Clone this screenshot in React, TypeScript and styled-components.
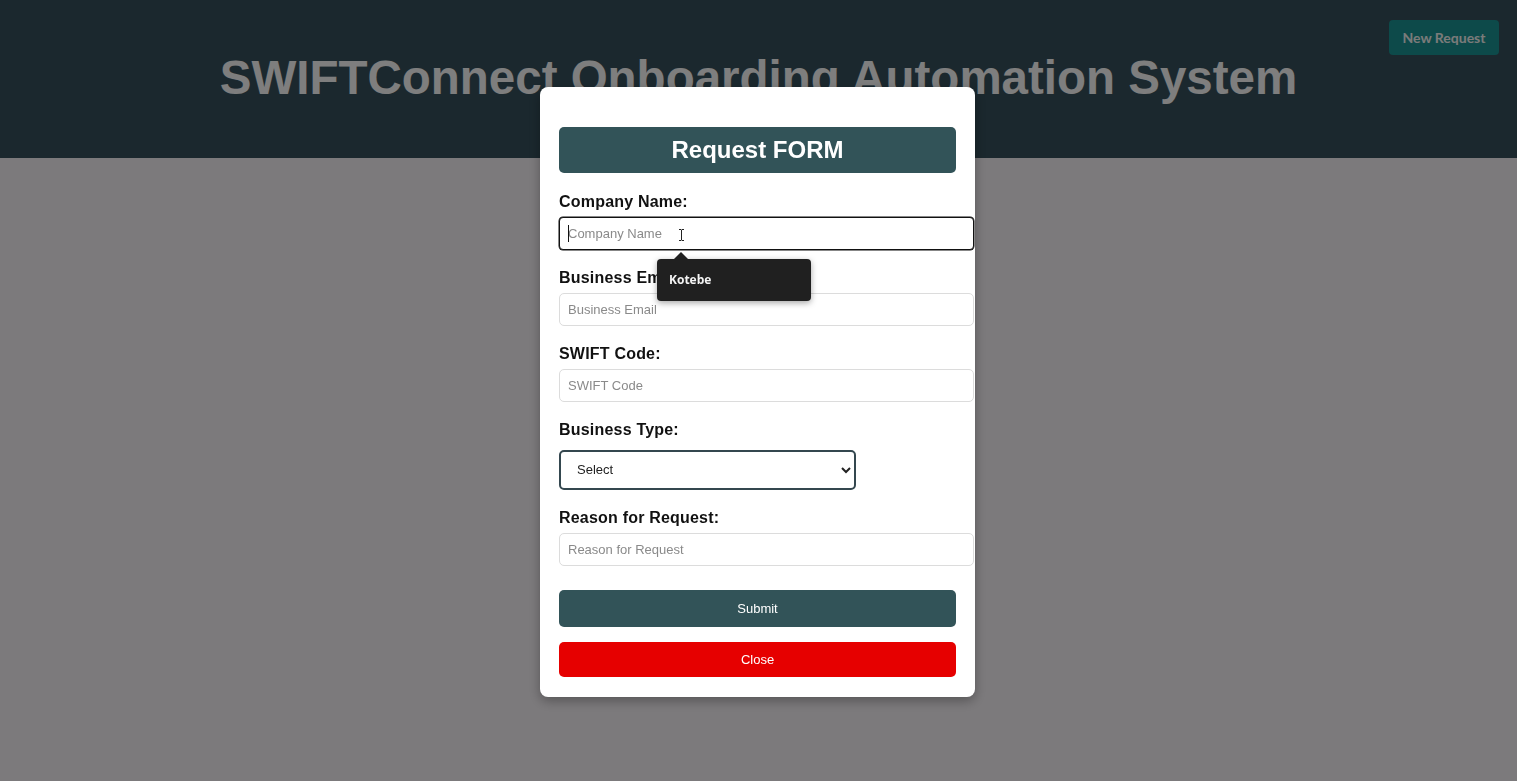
import React from "react";
import styled, { createGlobalStyle } from "styled-components";

const Global = createGlobalStyle`
  html, body { margin: 0; padding: 0; }
  body { font-family: "Liberation Sans", Arial, sans-serif; background: #f8f4f8; }
  * { box-sizing: content-box; }
`;

const Page = styled.div`
  min-height: 781px;
  background: #f8f4f8;
`;

const Header = styled.header`
  height: 158px;
  background: #36505c;
  display: grid;
  grid-template-columns: 1fr auto 1fr;
  align-items: center;
`;

const Title = styled.h1`
  grid-column: 2;
  margin: 0 0 4px;
  font-family: "Liberation Sans", Arial, sans-serif;
  font-size: 47.5px;
  font-weight: 700;
  color: #fcfcfc;
  white-space: nowrap;
`;

const NewButton = styled.button`
  grid-column: 3;
  justify-self: end;
  align-self: start;
  margin: 20px 18px 0 0;
  width: 110px;
  height: 35px;
  padding: 0;
  border: none;
  border-radius: 4px;
  background: #1a9494;
  color: #f4f6f4;
  font-family: Lato, "Liberation Sans", sans-serif;
  font-weight: 700;
  font-size: 14px;
`;

const Overlay = styled.div`
  position: fixed;
  inset: 0;
  background: rgba(0, 0, 0, 0.5);
  display: flex;
  align-items: center;
  justify-content: center;
`;

const Modal = styled.div`
  width: 397px;
  padding: 40px 19px 20px;
  margin-left: -2px;
  margin-top: 2px;
  background: #ffffff;
  border-radius: 8px;
  box-shadow: 0 4px 12px rgba(0, 0, 0, 0.3);
  display: flex;
  flex-direction: column;
`;

const Banner = styled.h2`
  margin: 0 0 20px;
  height: 46px;
  border-radius: 5px;
  background: #325358;
  color: #ffffff;
  font-size: 24px;
  font-weight: 700;
  display: flex;
  align-items: center;
  justify-content: center;
`;

const Field = styled.div<{ $gap: number }>`
  position: relative;
  display: flex;
  flex-direction: column;
  gap: ${(p) => p.$gap}px;
  margin-bottom: 19px;
`;

const Label = styled.label`
  font-size: 16px;
  font-weight: 700;
  color: #111;
  line-height: 18px;
  letter-spacing: 0.2px;
`;

const Input = styled.input<{ $focused?: boolean }>`
  width: 100%;
  padding: 8px;
  height: 15px;
  font-family: "Liberation Sans", Arial, sans-serif;
  font-size: 13px;
  border: 1px solid ${(p) => (p.$focused ? "#111" : "#dcdcdc")};
  box-shadow: ${(p) => (p.$focused ? "0 0 0 0.5px #111" : "none")};
  border-radius: ${(p) => (p.$focused ? 4 : 5)}px;
  outline: none;
  background: #fff;
  color: #222;
  &::placeholder { color: #8a8a8a; }
`;

const Select = styled.select`
  width: 297px;
  height: 40px;
  box-sizing: border-box;
  padding: 0 12px;
  border: 2px solid #34474f;
  border-radius: 5px;
  font-family: "Liberation Sans", Arial, sans-serif;
  font-size: 13px;
  color: #222;
  background: #fff;
`;

const Button = styled.button<{ $bg: string; $h: number }>`
  height: ${(p) => p.$h}px;
  padding: 0;
  border: none;
  border-radius: 5px;
  background: ${(p) => p.$bg};
  color: #fff;
  font-family: "Liberation Sans", Arial, sans-serif;
  font-size: 13px;
  margin-top: 5px;
  & + & { margin-top: 15px; }
`;

const Caret = styled.span`
  position: absolute;
  left: 9px;
  top: 32px;
  width: 1px;
  height: 17px;
  background: #111;
`;

const IBeam = styled.svg`
  position: absolute;
  left: 119px;
  top: 36px;
`;

const Suggest = styled.div`
  position: absolute;
  left: 98px;
  top: 66px;
  width: 154px;
  height: 42px;
  border-radius: 4px;
  background: #202020;
  box-shadow: 0 2px 6px rgba(0, 0, 0, 0.35);
  display: flex;
  align-items: center;
  box-sizing: border-box;
  padding-left: 12px;
  color: #f4f4f4;
  font-family: "Open Sans", sans-serif;
  font-weight: 700;
  font-size: 12px;
  z-index: 2;
  &::before {
    content: "";
    position: absolute;
    left: 16px;
    top: -7px;
    border-left: 8px solid transparent;
    border-right: 8px solid transparent;
    border-bottom: 8px solid #202020;
  }
`;

export default function App() {
  return (
    <>
      <Global />
      <Page>
        <Header>
          <Title>SWIFTConnect Onboarding Automation System</Title>
          <NewButton>New Request</NewButton>
        </Header>
      </Page>
      <Overlay>
        <Modal>
          <Banner>Request FORM</Banner>
          <Field $gap={6}>
            <Label>Company Name:</Label>
            <Input $focused placeholder="Company Name" />
            <Caret />
            <IBeam width="7" height="12" viewBox="0 0 7 12">
              <path d="M1 0.5h2l0.5 0.5 0.5-0.5h2M3.5 1v10M1 11.5h2l0.5-0.5 0.5 0.5h2" stroke="#222" strokeWidth="1" fill="none" />
            </IBeam>
            <Suggest>Kotebe</Suggest>
          </Field>
          <Field $gap={6}>
            <Label>Business Email:</Label>
            <Input placeholder="Business Email" />
          </Field>
          <Field $gap={6}>
            <Label>SWIFT Code:</Label>
            <Input placeholder="SWIFT Code" />
          </Field>
          <Field $gap={11}>
            <Label>Business Type:</Label>
            <Select defaultValue="">
              <option value="">Select</option>
            </Select>
          </Field>
          <Field $gap={6}>
            <Label>Reason for Request:</Label>
            <Input placeholder="Reason for Request" />
          </Field>
          <Button $bg="#325358" $h={37}>Submit</Button>
          <Button $bg="#e60000" $h={35}>Close</Button>
        </Modal>
      </Overlay>
    </>
  );
}
